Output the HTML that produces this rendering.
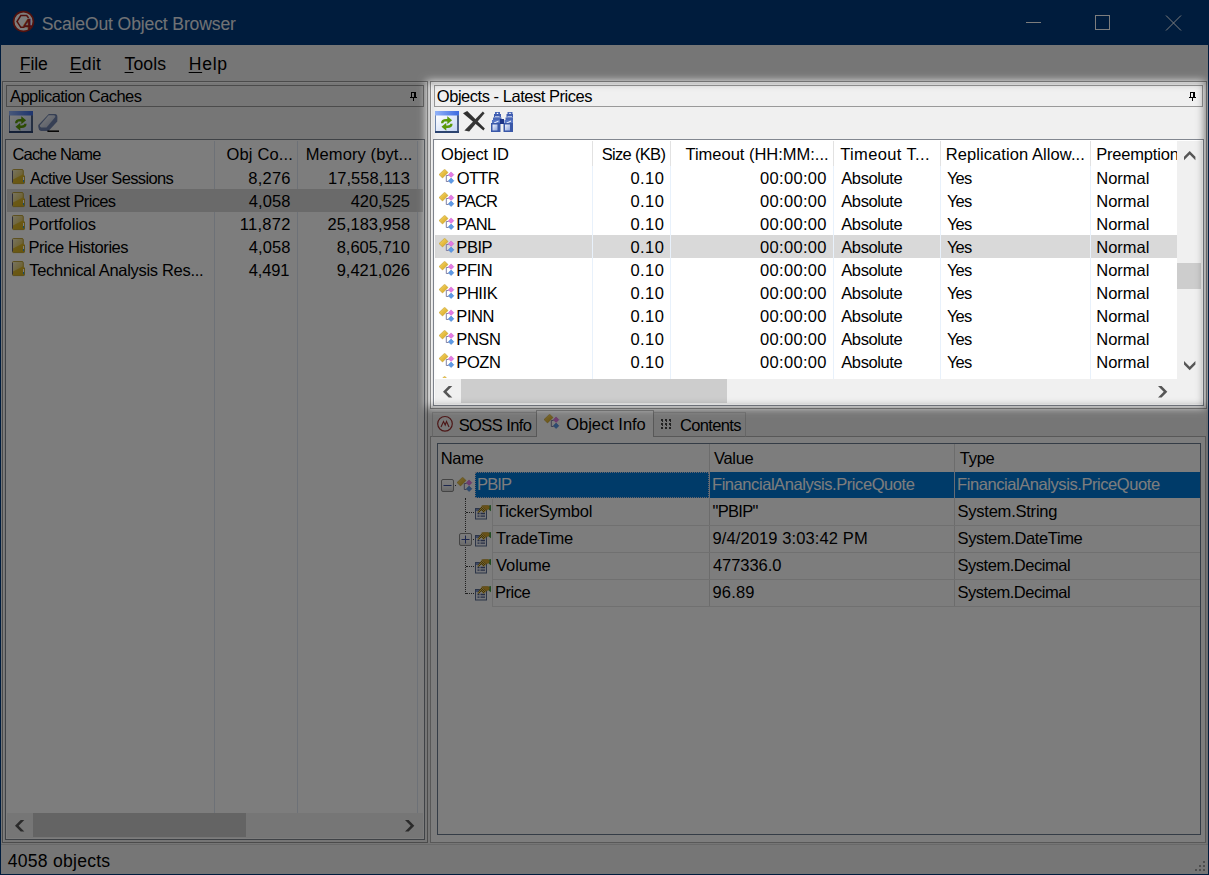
<!DOCTYPE html>
<html><head><meta charset="utf-8"><title>ScaleOut Object Browser</title>
<style>
*{box-sizing:border-box;margin:0;padding:0}
html,body{width:1209px;height:875px;overflow:hidden;background:#f0f0f0}
body{position:relative;font-family:"Liberation Sans",sans-serif;font-size:16.5px;color:#000}
.abs{position:absolute}
.t{position:absolute;white-space:nowrap;line-height:20px;height:20px}
.r{text-align:right}
.n{letter-spacing:.25px}
#title{left:0;top:0;width:1209px;height:45px;background:#00397c}
#frameL{left:0;top:45px;width:1px;height:830px;background:#00397c}
#frameR{left:1208px;top:45px;width:1px;height:830px;background:#00397c}
#frameB{left:0;top:874px;width:1209px;height:1px;background:#00397c}
#menu{left:1px;top:45px;width:1207px;height:37px;background:#f0f0f0}
.mn u{text-decoration:underline;text-underline-offset:1.5px;text-decoration-thickness:1px}
.capbox{border:1px solid #999;background:#f0f0f0;height:21px}
.list{background:#fff;border:1px solid #828790}
.hsep{position:absolute;width:1px;background:#dfe7f3}
.csep{position:absolute;width:1px;background:#e8f1fb}
.sel{position:absolute;background:#d9d9d9}
.w{color:#fff}
</style></head><body>
<svg width="0" height="0" style="position:absolute">
 <defs>
  <linearGradient id="rg" x1="0" y1="0" x2="1" y2="1"><stop offset="0" stop-color="#fff"/><stop offset="1" stop-color="#c5d5f5"/></linearGradient>
  <linearGradient id="eg" x1="0" y1="0" x2="1" y2="1"><stop offset="0" stop-color="#fff"/><stop offset="1" stop-color="#aab4cc"/></linearGradient>
  <linearGradient id="bg" x1="0" y1="0" x2="1" y2="0"><stop offset="0" stop-color="#8fa8e0"/><stop offset=".45" stop-color="#dfe8fa"/><stop offset="1" stop-color="#3f5fb4"/></linearGradient>
  <linearGradient id="fg" x1="0" y1="0" x2="1" y2="1"><stop offset="0" stop-color="#f4eecc"/><stop offset=".55" stop-color="#e2cc70"/><stop offset="1" stop-color="#d8b020"/></linearGradient>
  <linearGradient id="tg" x1="0" y1="0" x2="1" y2="0"><stop offset="0" stop-color="#94b4f8"/><stop offset="1" stop-color="#3c6ae0"/></linearGradient>
  <linearGradient id="yg" x1="0" y1="0" x2="1" y2="1"><stop offset="0" stop-color="#f8dc70"/><stop offset="1" stop-color="#d4a018"/></linearGradient>
  <linearGradient id="ig" x1="0" y1="0" x2="1" y2="1"><stop offset="0" stop-color="#eef2fc"/><stop offset="1" stop-color="#8ea4dc"/></linearGradient>
  <linearGradient id="xg" x1="0" y1="0" x2="0" y2="1"><stop offset="0" stop-color="#fff"/><stop offset=".5" stop-color="#f4f4f4"/><stop offset="1" stop-color="#d4d4d4"/></linearGradient>
  <g id="refico">
   <rect x="0" y="0" width="24" height="22" fill="#7088b0"/>
   <rect x="1" y="4" width="21" height="16" fill="url(#rg)"/>
   <rect x="0" y="0" width="24" height="4.500" fill="url(#tg)"/>
   <rect x="22" y="4.500" width="2" height="17.500" fill="#4c6088"/>
   <rect x="0" y="20" width="24" height="2" fill="#2c4470"/>
   <path d="M6 12.200c0-3 2-4.300 5-4.300h1.300V5.200l4.800 4-4.800 4v-2.700H11c-1.700 0-2.600.4-2.600 1.700z" fill="#5a9a08"/>
   <path d="M17.600 12.800c0 3-2 4.300-5 4.300h-1.300v2.700l-4.800-4 4.800-4v2.700h1.300c1.700 0 2.600-.4 2.600-1.700z" fill="#5a9a08"/>
  </g>
  <g id="pinico"><path d="M1 0H6V5H7V6H4V9H3V6H0V5H1ZM2 1V5H4V1Z" fill="#000" fill-rule="evenodd"/></g>
  <g id="objico">
   <path d="M7.300 6.500V12.500M7.300 6.500H9.600M7.300 12.500H9.600" fill="none" stroke="#74749c" stroke-width=".9"/>
   <path d="M0 5.600L5.600 .2L9 3.500L3.500 9Z" fill="url(#yg)" stroke="#b8901c" stroke-width=".5"/>
   <path d="M9.300 5.700L12.100 2.900L14.900 5.700L12.100 8.500Z" fill="#e47ae4" stroke="#b848b8" stroke-width=".4"/>
   <path d="M9.300 11.800L12.100 9L14.900 11.800L12.100 14.600Z" fill="#5c9ae6" stroke="#2c64c0" stroke-width=".4"/>
  </g>
  <g id="foldico">
   <path d="M1.500 .5H10Q11.300 .5 11.300 1.800V5.800L12.600 7V13.400Q12.600 14.600 11.400 14.600H1.500Q.5 14.600 .5 13.600V1.500Q.5 .5 1.500 .5Z" fill="url(#fg)" stroke="#b09018" stroke-width=".8"/>
   <path d="M1 13.500L1 10.500L10.800 5.500L12.200 7V13.500Q12.200 14.200 11.400 14.200H1.600Q1 14.200 1 13.500Z" fill="#d6ac14" opacity=".75"/>
   <path d="M.5 1.800V13.400" stroke="#5c5c74" stroke-width="1"/>
   <rect x="11" y="8" width="1" height="3" fill="#fff"/><rect x="11" y="11" width="1" height="2.200" fill="#2a9ad8"/>
  </g>
  <pattern id="ck" width="2" height="2" patternUnits="userSpaceOnUse"><rect width="2" height="2" fill="#e8c860"/><rect width="1" height="1" fill="#8a6a10"/><rect x="1" y="1" width="1" height="1" fill="#8a6a10"/></pattern>
  <g id="propico">
   <rect x=".5" y="3.500" width="11" height="10.500" fill="#eef0f6" stroke="#5a6c94" stroke-width="1"/>
   <rect x="1" y="4" width="10" height="2" fill="#7c94cc"/>
   <path d="M2.500 8.500h2M5.500 8.500h4.500M2.500 11.200h2M5.500 11.200h4.500" stroke="#4c5c8c" stroke-width="1.300"/>
   <path d="M13.800 .6L16 0V6.200L13.800 4.800Z" fill="#48a048"/>
   <path d="M2.200 7.200L6.800 .8L11.600 5L8.600 8L6.400 5.600L4 7.800Z" fill="url(#ck)"/>
   <path d="M6.800 .8Q8 .1 9.500 .3H12.800Q14.600 .6 14.500 2.400Q14.300 4.300 12.600 4.600L10.800 5L9 3Z" fill="#d4a630" stroke="#a88420" stroke-width=".4"/>
  </g>
  <g id="arL"><path d="M0 5.700L5.700 0H9.300L3.600 5.700L9.300 11.400H5.700Z" fill="#565656"/></g>
  <g id="arR"><path d="M9.300 5.700L3.600 0H0L5.700 5.700L0 11.400H3.600Z" fill="#565656"/></g>
  <g id="arU"><path d="M5.700 0L0 5.700V9.300L5.700 3.600L11.400 9.300V5.700Z" fill="#565656"/></g>
  <g id="arD"><path d="M5.700 9.300L0 3.600V0L5.700 5.700L11.400 0V3.600Z" fill="#565656"/></g>
 </defs>
</svg>
<div id="title" class="abs">
<svg class="abs" style="left:12px;top:10px" width="24" height="24" viewBox="0 0 24 24"><circle cx="11.500" cy="11.500" r="9.900" fill="#fff" stroke="#a8241c" stroke-width="1.700"/><path d="M12.500 17.300H8.800L5 11.500L8.800 5.500H14.700L16.600 8" fill="none" stroke="#a8241c" stroke-width="1.500"/><text x="11.400" y="18.700" font-family="Liberation Sans, sans-serif" font-weight="bold" font-size="14.500" fill="#a8241c" stroke="#a8241c" stroke-width=".5">4</text></svg>
<div class="t " style="left:41.65px;top:12px;font-size:17.6px;line-height:24px;height:24px;letter-spacing:-0.145px;color:#e6e9ee;">ScaleOut Object Browser</div>
<svg class="abs" style="left:1020px;top:8px" width="170" height="30" viewBox="0 0 170 30" fill="none" stroke="#fff" stroke-width="1"><path d="M6 14.500H21"/><rect x="75.500" y="7.500" width="14" height="14"/><path d="M146 7.500L161 22.500M161 7.500L146 22.500"/></svg>
</div>
<div id="frameL" class="abs"></div><div id="frameR" class="abs"></div><div id="frameB" class="abs"></div>
<div class="abs" style="left:1px;top:45px;width:1207px;height:37px;background:#f0f0f0"></div>
<div class="t mn" style="left:19.80px;top:52px;font-size:17.6px;line-height:24px;height:24px;letter-spacing:-0.133px;"><u>F</u>ile</div>
<div class="t mn" style="left:69.80px;top:52px;font-size:17.6px;line-height:24px;height:24px;letter-spacing:0.283px;"><u>E</u>dit</div>
<div class="t mn" style="left:124.60px;top:52px;font-size:17.6px;line-height:24px;height:24px;letter-spacing:0.075px;"><u>T</u>ools</div>
<div class="t mn" style="left:188.70px;top:52px;font-size:17.6px;line-height:24px;height:24px;letter-spacing:0.733px;"><u>H</u>elp</div>
<div class="abs" style="left:2px;top:81px;width:426px;height:762px;border:1px solid #999;box-shadow:inset 1px 1px 0 #fff"></div>
<div class="abs capbox" style="left:6px;top:85px;width:418px;height:22px;"></div>
<div class="t " style="left:10.00px;top:86px;font-size:16.5px;line-height:20px;height:20px;letter-spacing:-0.544px;">Application Caches</div>
<svg class="abs" style="left:410px;top:92px" width="8" height="9" viewBox="0 0 8 9"><use href="#pinico"/></svg>
<svg class="abs" style="left:9px;top:111px" width="24" height="22" viewBox="0 0 24 22"><use href="#refico"/></svg>
<svg class="abs" style="left:37px;top:111px" width="24" height="22" viewBox="0 0 24 22"><path d="M11.800 3H18.500Q20.600 3.500 20.400 6L20.300 10.500L11.500 20H4Q1.300 19 1.300 16V14Z" fill="#6e82ac"/><path d="M11.600 4.200H17.200Q18.600 4.600 18.300 6L9.500 16.600H4.200Q2.800 16 2.800 14.400Z" fill="url(#eg)"/><path d="M10.400 20.200H22" stroke="#111" stroke-width="1.600"/></svg>
<div class="abs list" style="left:5px;top:139px;width:420px;height:701px;"></div>
<div class="hsep" style="left:214px;top:141px;width:1px;height:672px;"></div>
<div class="hsep" style="left:297px;top:141px;width:1px;height:672px;"></div>
<div class="hsep" style="left:417px;top:141px;width:1px;height:672px;"></div>
<div class="sel" style="left:7px;top:189px;width:416px;height:23px;"></div>
<div class="t " style="left:12.45px;top:144px;font-size:16.5px;line-height:20px;height:20px;letter-spacing:-0.806px;">Cache Name</div>
<div class="t " style="left:226.55px;top:144px;font-size:16.5px;line-height:20px;height:20px;letter-spacing:0.156px;">Obj Co...</div>
<div class="t " style="left:305.75px;top:144px;font-size:16.5px;line-height:20px;height:20px;letter-spacing:0.096px;">Memory (byt...</div>
<svg class="abs" style="left:12px;top:169px" width="13" height="16" viewBox="0 0 13 16"><use href="#foldico"/></svg>
<div class="t " style="left:30.00px;top:168px;font-size:16.5px;line-height:20px;height:20px;letter-spacing:-0.634px;">Active User Sessions</div>
<div class="t " style="left:248.35px;top:168px;font-size:16.5px;line-height:20px;height:20px;letter-spacing:0.212px;">8,276</div>
<div class="t " style="left:327.95px;top:168px;font-size:16.5px;line-height:20px;height:20px;letter-spacing:0.067px;">17,558,113</div>
<svg class="abs" style="left:12px;top:192px" width="13" height="16" viewBox="0 0 13 16"><use href="#foldico"/></svg>
<div class="t " style="left:28.45px;top:191px;font-size:16.5px;line-height:20px;height:20px;letter-spacing:-0.642px;">Latest Prices</div>
<div class="t " style="left:248.85px;top:191px;font-size:16.5px;line-height:20px;height:20px;letter-spacing:0.087px;">4,058</div>
<div class="t " style="left:350.75px;top:191px;font-size:16.5px;line-height:20px;height:20px;letter-spacing:-0.075px;">420,525</div>
<svg class="abs" style="left:12px;top:215px" width="13" height="16" viewBox="0 0 13 16"><use href="#foldico"/></svg>
<div class="t " style="left:28.45px;top:214px;font-size:16.5px;line-height:20px;height:20px;letter-spacing:-0.133px;">Portfolios</div>
<div class="t " style="left:239.75px;top:214px;font-size:16.5px;line-height:20px;height:20px;letter-spacing:0.290px;">11,872</div>
<div class="t " style="left:327.55px;top:214px;font-size:16.5px;line-height:20px;height:20px;letter-spacing:0.000px;">25,183,958</div>
<svg class="abs" style="left:12px;top:238px" width="13" height="16" viewBox="0 0 13 16"><use href="#foldico"/></svg>
<div class="t " style="left:28.45px;top:237px;font-size:16.5px;line-height:20px;height:20px;letter-spacing:-0.443px;">Price Histories</div>
<div class="t " style="left:248.85px;top:237px;font-size:16.5px;line-height:20px;height:20px;letter-spacing:0.087px;">4,058</div>
<div class="t " style="left:336.65px;top:237px;font-size:16.5px;line-height:20px;height:20px;letter-spacing:-0.012px;">8,605,710</div>
<svg class="abs" style="left:12px;top:261px" width="13" height="16" viewBox="0 0 13 16"><use href="#foldico"/></svg>
<div class="t " style="left:29.25px;top:260px;font-size:16.5px;line-height:20px;height:20px;letter-spacing:-0.302px;">Technical Analysis Res...</div>
<div class="t " style="left:248.85px;top:260px;font-size:16.5px;line-height:20px;height:20px;letter-spacing:-0.187px;">4,491</div>
<div class="t " style="left:336.65px;top:260px;font-size:16.5px;line-height:20px;height:20px;letter-spacing:-0.012px;">9,421,026</div>
<div class="abs" style="left:7px;top:813px;width:416px;height:25px;background:#f0f0f0"></div>
<div class="abs" style="left:33px;top:813px;width:213px;height:24px;background:#cdcdcd"></div>
<svg class="abs" style="left:15px;top:819.7px" width="10" height="12" viewBox="0 0 10 12"><use href="#arL"/></svg>
<svg class="abs" style="left:404.9px;top:819.7px" width="10" height="12" viewBox="0 0 10 12"><use href="#arR"/></svg>
<div class="abs" style="left:430px;top:81px;width:777px;height:328px;border:1px solid #999;box-shadow:inset 1px 1px 0 #fff"></div>
<div class="abs capbox" style="left:434px;top:85px;width:769px;height:22px;"></div>
<div class="t " style="left:436.85px;top:86px;font-size:16.5px;line-height:20px;height:20px;letter-spacing:-0.470px;">Objects - Latest Prices</div>
<svg class="abs" style="left:1189px;top:92px" width="8" height="9" viewBox="0 0 8 9"><use href="#pinico"/></svg>
<svg class="abs" style="left:435px;top:111px" width="24" height="22" viewBox="0 0 24 22"><use href="#refico"/></svg>
<svg class="abs" style="left:463px;top:111px" width="23" height="22" viewBox="0 0 23 22"><path d="M0 2.200L4.200 0L21.800 17.400L20.400 19.600Z" fill="#303030"/><path d="M19.800 .6L21.600 2.200L6.200 20.600L1.400 19.400Z" fill="#363636"/></svg>
<svg class="abs" style="left:491px;top:112px" width="22" height="20" viewBox="0 0 22 20"><g transform="translate(0 0)"><rect x="4" y="0" width="5" height="2.600" fill="#4a68b8"/><circle cx="6.500" cy="1.500" r=".8" fill="#fff"/><rect x="3" y="2" width="7" height="3.500" fill="#3f5cb0"/><rect x="4" y="4.200" width="4.500" height="1" fill="#c8d4f0"/><rect x="2" y="5.500" width="8.500" height="3" fill="#4a68b8"/><rect x="1" y="8" width="9.500" height="3.500" fill="#5876c4"/><path d="M3 10.500L7.500 8.500V9.800L3 11.500Z" fill="#e4eafa"/><rect x="0" y="11" width="9.500" height="9" fill="#3a58a8"/><rect x="1.500" y="12.500" width="5" height="6" fill="url(#ig)"/></g><g transform="translate(12.5 0)"><rect x="4" y="0" width="5" height="2.600" fill="#4a68b8"/><circle cx="6.500" cy="1.500" r=".8" fill="#fff"/><rect x="3" y="2" width="7" height="3.500" fill="#3f5cb0"/><rect x="4" y="4.200" width="4.500" height="1" fill="#c8d4f0"/><rect x="2" y="5.500" width="8.500" height="3" fill="#4a68b8"/><rect x="1" y="8" width="9.500" height="3.500" fill="#5876c4"/><path d="M3 10.500L7.500 8.500V9.800L3 11.500Z" fill="#e4eafa"/><rect x="0" y="11" width="9.500" height="9" fill="#3a58a8"/><rect x="1.500" y="12.500" width="5" height="6" fill="url(#ig)"/></g><rect x="9" y="7" width="4" height="5" fill="#1c3488"/></svg>
<div class="abs list" style="left:433px;top:139px;width:771px;height:267px;"></div>
<div class="sel" style="left:435px;top:235px;width:742px;height:23px;"></div>
<div class="csep" style="left:592px;top:141px;width:1px;height:238px;"></div>
<div class="abs" style="left:592px;top:141px;width:1px;height:25px;background:#e2e2e2"></div>
<div class="csep" style="left:670px;top:141px;width:1px;height:238px;"></div>
<div class="abs" style="left:670px;top:141px;width:1px;height:25px;background:#e2e2e2"></div>
<div class="csep" style="left:833px;top:141px;width:1px;height:238px;"></div>
<div class="abs" style="left:833px;top:141px;width:1px;height:25px;background:#e2e2e2"></div>
<div class="csep" style="left:940px;top:141px;width:1px;height:238px;"></div>
<div class="abs" style="left:940px;top:141px;width:1px;height:25px;background:#e2e2e2"></div>
<div class="csep" style="left:1090px;top:141px;width:1px;height:238px;"></div>
<div class="abs" style="left:1090px;top:141px;width:1px;height:25px;background:#e2e2e2"></div>
<div class="t " style="left:441.00px;top:144px;font-size:16.5px;line-height:20px;height:20px;letter-spacing:-0.100px;">Object ID</div>
<div class="t " style="left:601.75px;top:144px;font-size:16.5px;line-height:20px;height:20px;letter-spacing:-0.688px;">Size (KB)</div>
<div class="t " style="left:685.50px;top:144px;font-size:16.5px;line-height:20px;height:20px;letter-spacing:-0.015px;">Timeout (HH:MM:...</div>
<div class="t " style="left:840.25px;top:144px;font-size:16.5px;line-height:20px;height:20px;letter-spacing:0.364px;">Timeout T...</div>
<div class="t " style="left:945.75px;top:144px;font-size:16.5px;line-height:20px;height:20px;letter-spacing:0.079px;">Replication Allow...</div>
<div class="t " style="left:1096.25px;top:144px;font-size:16.5px;line-height:20px;height:20px;letter-spacing:-0.200px;width:80.75px;overflow:hidden;">Preemption</div>
<svg class="abs" style="left:439px;top:168.5px" width="16" height="16" viewBox="0 0 16 16"><use href="#objico"/></svg>
<div class="t " style="left:456.85px;top:168px;font-size:16.5px;line-height:20px;height:20px;letter-spacing:-0.717px;">OTTR</div>
<div class="t " style="left:630.50px;top:168px;font-size:16.5px;line-height:20px;height:20px;letter-spacing:0.417px;">0.10</div>
<div class="t " style="left:760.00px;top:168px;font-size:16.5px;line-height:20px;height:20px;letter-spacing:0.321px;">00:00:00</div>
<div class="t " style="left:841.25px;top:168px;font-size:16.5px;line-height:20px;height:20px;letter-spacing:-0.393px;">Absolute</div>
<div class="t " style="left:947.00px;top:168px;font-size:16.5px;line-height:20px;height:20px;letter-spacing:-0.875px;">Yes</div>
<div class="t " style="left:1096.25px;top:168px;font-size:16.5px;line-height:20px;height:20px;letter-spacing:0.000px;">Normal</div>
<svg class="abs" style="left:439px;top:191.5px" width="16" height="16" viewBox="0 0 16 16"><use href="#objico"/></svg>
<div class="t " style="left:456.35px;top:191px;font-size:16.5px;line-height:20px;height:20px;letter-spacing:-1.033px;">PACR</div>
<div class="t " style="left:630.50px;top:191px;font-size:16.5px;line-height:20px;height:20px;letter-spacing:0.417px;">0.10</div>
<div class="t " style="left:760.00px;top:191px;font-size:16.5px;line-height:20px;height:20px;letter-spacing:0.321px;">00:00:00</div>
<div class="t " style="left:841.25px;top:191px;font-size:16.5px;line-height:20px;height:20px;letter-spacing:-0.393px;">Absolute</div>
<div class="t " style="left:947.00px;top:191px;font-size:16.5px;line-height:20px;height:20px;letter-spacing:-0.875px;">Yes</div>
<div class="t " style="left:1096.25px;top:191px;font-size:16.5px;line-height:20px;height:20px;letter-spacing:0.000px;">Normal</div>
<svg class="abs" style="left:439px;top:214.5px" width="16" height="16" viewBox="0 0 16 16"><use href="#objico"/></svg>
<div class="t " style="left:456.35px;top:214px;font-size:16.5px;line-height:20px;height:20px;letter-spacing:-0.700px;">PANL</div>
<div class="t " style="left:630.50px;top:214px;font-size:16.5px;line-height:20px;height:20px;letter-spacing:0.417px;">0.10</div>
<div class="t " style="left:760.00px;top:214px;font-size:16.5px;line-height:20px;height:20px;letter-spacing:0.321px;">00:00:00</div>
<div class="t " style="left:841.25px;top:214px;font-size:16.5px;line-height:20px;height:20px;letter-spacing:-0.393px;">Absolute</div>
<div class="t " style="left:947.00px;top:214px;font-size:16.5px;line-height:20px;height:20px;letter-spacing:-0.875px;">Yes</div>
<div class="t " style="left:1096.25px;top:214px;font-size:16.5px;line-height:20px;height:20px;letter-spacing:0.000px;">Normal</div>
<svg class="abs" style="left:439px;top:237.5px" width="16" height="16" viewBox="0 0 16 16"><use href="#objico"/></svg>
<div class="t " style="left:456.35px;top:237px;font-size:16.5px;line-height:20px;height:20px;letter-spacing:-0.450px;">PBIP</div>
<div class="t " style="left:630.50px;top:237px;font-size:16.5px;line-height:20px;height:20px;letter-spacing:0.417px;">0.10</div>
<div class="t " style="left:760.00px;top:237px;font-size:16.5px;line-height:20px;height:20px;letter-spacing:0.321px;">00:00:00</div>
<div class="t " style="left:841.25px;top:237px;font-size:16.5px;line-height:20px;height:20px;letter-spacing:-0.393px;">Absolute</div>
<div class="t " style="left:947.00px;top:237px;font-size:16.5px;line-height:20px;height:20px;letter-spacing:-0.875px;">Yes</div>
<div class="t " style="left:1096.25px;top:237px;font-size:16.5px;line-height:20px;height:20px;letter-spacing:0.000px;">Normal</div>
<svg class="abs" style="left:439px;top:260.5px" width="16" height="16" viewBox="0 0 16 16"><use href="#objico"/></svg>
<div class="t " style="left:456.35px;top:260px;font-size:16.5px;line-height:20px;height:20px;letter-spacing:-0.450px;">PFIN</div>
<div class="t " style="left:630.50px;top:260px;font-size:16.5px;line-height:20px;height:20px;letter-spacing:0.417px;">0.10</div>
<div class="t " style="left:760.00px;top:260px;font-size:16.5px;line-height:20px;height:20px;letter-spacing:0.321px;">00:00:00</div>
<div class="t " style="left:841.25px;top:260px;font-size:16.5px;line-height:20px;height:20px;letter-spacing:-0.393px;">Absolute</div>
<div class="t " style="left:947.00px;top:260px;font-size:16.5px;line-height:20px;height:20px;letter-spacing:-0.875px;">Yes</div>
<div class="t " style="left:1096.25px;top:260px;font-size:16.5px;line-height:20px;height:20px;letter-spacing:0.000px;">Normal</div>
<svg class="abs" style="left:439px;top:283.5px" width="16" height="16" viewBox="0 0 16 16"><use href="#objico"/></svg>
<div class="t " style="left:456.35px;top:283px;font-size:16.5px;line-height:20px;height:20px;letter-spacing:-0.450px;">PHIIK</div>
<div class="t " style="left:630.50px;top:283px;font-size:16.5px;line-height:20px;height:20px;letter-spacing:0.417px;">0.10</div>
<div class="t " style="left:760.00px;top:283px;font-size:16.5px;line-height:20px;height:20px;letter-spacing:0.321px;">00:00:00</div>
<div class="t " style="left:841.25px;top:283px;font-size:16.5px;line-height:20px;height:20px;letter-spacing:-0.393px;">Absolute</div>
<div class="t " style="left:947.00px;top:283px;font-size:16.5px;line-height:20px;height:20px;letter-spacing:-0.875px;">Yes</div>
<div class="t " style="left:1096.25px;top:283px;font-size:16.5px;line-height:20px;height:20px;letter-spacing:0.000px;">Normal</div>
<svg class="abs" style="left:439px;top:306.5px" width="16" height="16" viewBox="0 0 16 16"><use href="#objico"/></svg>
<div class="t " style="left:456.35px;top:306px;font-size:16.5px;line-height:20px;height:20px;letter-spacing:-0.450px;">PINN</div>
<div class="t " style="left:630.50px;top:306px;font-size:16.5px;line-height:20px;height:20px;letter-spacing:0.417px;">0.10</div>
<div class="t " style="left:760.00px;top:306px;font-size:16.5px;line-height:20px;height:20px;letter-spacing:0.321px;">00:00:00</div>
<div class="t " style="left:841.25px;top:306px;font-size:16.5px;line-height:20px;height:20px;letter-spacing:-0.393px;">Absolute</div>
<div class="t " style="left:947.00px;top:306px;font-size:16.5px;line-height:20px;height:20px;letter-spacing:-0.875px;">Yes</div>
<div class="t " style="left:1096.25px;top:306px;font-size:16.5px;line-height:20px;height:20px;letter-spacing:0.000px;">Normal</div>
<svg class="abs" style="left:439px;top:329.5px" width="16" height="16" viewBox="0 0 16 16"><use href="#objico"/></svg>
<div class="t " style="left:456.35px;top:329px;font-size:16.5px;line-height:20px;height:20px;letter-spacing:-0.450px;">PNSN</div>
<div class="t " style="left:630.50px;top:329px;font-size:16.5px;line-height:20px;height:20px;letter-spacing:0.417px;">0.10</div>
<div class="t " style="left:760.00px;top:329px;font-size:16.5px;line-height:20px;height:20px;letter-spacing:0.321px;">00:00:00</div>
<div class="t " style="left:841.25px;top:329px;font-size:16.5px;line-height:20px;height:20px;letter-spacing:-0.393px;">Absolute</div>
<div class="t " style="left:947.00px;top:329px;font-size:16.5px;line-height:20px;height:20px;letter-spacing:-0.875px;">Yes</div>
<div class="t " style="left:1096.25px;top:329px;font-size:16.5px;line-height:20px;height:20px;letter-spacing:0.000px;">Normal</div>
<svg class="abs" style="left:439px;top:352.5px" width="16" height="16" viewBox="0 0 16 16"><use href="#objico"/></svg>
<div class="t " style="left:456.35px;top:352px;font-size:16.5px;line-height:20px;height:20px;letter-spacing:-0.450px;">POZN</div>
<div class="t " style="left:630.50px;top:352px;font-size:16.5px;line-height:20px;height:20px;letter-spacing:0.417px;">0.10</div>
<div class="t " style="left:760.00px;top:352px;font-size:16.5px;line-height:20px;height:20px;letter-spacing:0.321px;">00:00:00</div>
<div class="t " style="left:841.25px;top:352px;font-size:16.5px;line-height:20px;height:20px;letter-spacing:-0.393px;">Absolute</div>
<div class="t " style="left:947.00px;top:352px;font-size:16.5px;line-height:20px;height:20px;letter-spacing:-0.875px;">Yes</div>
<div class="t " style="left:1096.25px;top:352px;font-size:16.5px;line-height:20px;height:20px;letter-spacing:0.000px;">Normal</div>
<svg class="abs" style="left:439px;top:375.5px;clip-path:inset(0 0 13.5px 0)" width="16" height="16" viewBox="0 0 16 16"><use href="#objico"/></svg>
<div class="abs" style="left:1177px;top:141px;width:25px;height:263px;background:#f0f0f0"></div>
<div class="abs" style="left:1177px;top:263px;width:24px;height:26px;background:#cdcdcd"></div>
<svg class="abs" style="left:1183.9px;top:151.1px" width="12" height="10" viewBox="0 0 12 10"><use href="#arU"/></svg>
<svg class="abs" style="left:1183.9px;top:360.8px" width="12" height="10" viewBox="0 0 12 10"><use href="#arD"/></svg>
<div class="abs" style="left:435px;top:379px;width:742px;height:25px;background:#f0f0f0"></div>
<div class="abs" style="left:461px;top:379px;width:266px;height:24px;background:#cdcdcd"></div>
<svg class="abs" style="left:443px;top:386px" width="10" height="12" viewBox="0 0 10 12"><use href="#arL"/></svg>
<svg class="abs" style="left:1158px;top:386px" width="10" height="12" viewBox="0 0 10 12"><use href="#arR"/></svg>
<div class="abs" style="left:430px;top:436px;width:776px;height:407px;border:1px solid #b4b4b4;background:#fff"></div>
<div class="abs" style="left:432px;top:412px;width:105px;height:25px;border:1px solid #d0d0d0;border-bottom-color:#b4b4b4;background:#f0f0f0"></div>
<div class="abs" style="left:653px;top:412px;width:93px;height:25px;border:1px solid #d0d0d0;border-bottom-color:#b4b4b4;background:#f0f0f0"></div>
<div class="abs" style="left:536px;top:410px;width:118px;height:27px;border:1px solid #b4b4b4;border-bottom:none;background:#fff"></div>
<svg class="abs" style="left:436px;top:415px" width="18" height="18" viewBox="0 0 18 18"><circle cx="9" cy="8.800" r="7.300" fill="#f4f4f4" stroke="#9c3030" stroke-width="1.200"/><path d="M5 12L7.500 6.500L9.200 10L10.500 6.500L13 12" fill="none" stroke="#9c3030" stroke-width="1.100"/></svg>
<div class="t " style="left:458.65px;top:415px;font-size:16.5px;line-height:20px;height:20px;letter-spacing:-0.587px;">SOSS Info</div>
<svg class="abs" style="left:544px;top:413.5px" width="16" height="16" viewBox="0 0 16 16"><use href="#objico"/></svg>
<div class="t " style="left:566.25px;top:414px;font-size:16.5px;line-height:20px;height:20px;letter-spacing:-0.025px;">Object Info</div>
<svg class="abs" style="left:660px;top:418px" width="13" height="13" viewBox="0 0 13 13"><g fill="#444"><rect x="1" y="1" width="2" height="2"/><rect x="2" y="3" width="1" height="1"/><rect x="5" y="1" width="2" height="2"/><rect x="6" y="3" width="1" height="1"/><rect x="9" y="1" width="2" height="2"/><rect x="10" y="3" width="1" height="1"/><rect x="1" y="5" width="2" height="2"/><rect x="2" y="7" width="1" height="1"/><rect x="5" y="5" width="2" height="2"/><rect x="6" y="7" width="1" height="1"/><rect x="9" y="5" width="2" height="2"/><rect x="10" y="7" width="1" height="1"/><rect x="1" y="9" width="2" height="2"/><rect x="5" y="9" width="2" height="2"/><rect x="9" y="9" width="2" height="2"/></g></svg>
<div class="t " style="left:679.95px;top:415px;font-size:16.5px;line-height:20px;height:20px;letter-spacing:-0.636px;">Contents</div>
<div class="abs" style="left:437px;top:443px;width:764px;height:392px;border:1px solid #6b7a90;background:#fff"></div>
<div class="abs" style="left:709px;top:444px;width:1px;height:162px;background:#dcdcdc"></div>
<div class="abs" style="left:954px;top:444px;width:1px;height:162px;background:#dcdcdc"></div>
<div class="t " style="left:440.75px;top:448px;font-size:16.5px;line-height:20px;height:20px;letter-spacing:-0.333px;">Name</div>
<div class="t " style="left:714.00px;top:448px;font-size:16.5px;line-height:20px;height:20px;letter-spacing:-0.312px;">Value</div>
<div class="t " style="left:959.75px;top:448px;font-size:16.5px;line-height:20px;height:20px;letter-spacing:-0.250px;">Type</div>
<div class="abs" style="left:475px;top:472px;width:725px;height:26px;background:#0078d7"></div>
<div class="abs" style="left:475px;top:472px;width:234px;height:26px;border:1px dotted #ccd"></div>
<div class="abs" style="left:709px;top:472px;width:1px;height:26px;background:#d0dcec"></div>
<div class="abs" style="left:954px;top:472px;width:1px;height:26px;background:#d0dcec"></div>
<div class="t w" style="left:477.00px;top:474px;font-size:16.5px;line-height:20px;height:20px;letter-spacing:-0.833px;">PBIP</div>
<div class="t w" style="left:712.00px;top:474px;font-size:16.5px;line-height:20px;height:20px;letter-spacing:-0.435px;">FinancialAnalysis.PriceQuote</div>
<div class="t w" style="left:957.00px;top:474px;font-size:16.5px;line-height:20px;height:20px;letter-spacing:-0.426px;">FinancialAnalysis.PriceQuote</div>
<svg class="abs" style="left:457px;top:476.5px" width="16" height="16" viewBox="0 0 16 16"><use href="#objico"/></svg>
<div class="abs" style="left:492px;top:525px;width:708px;height:1px;background:#e4e4e4"></div>
<div class="abs" style="left:492px;top:499px;width:1px;height:27px;background:#e4e4e4"></div>
<div class="t " style="left:496.00px;top:501px;font-size:16.5px;line-height:20px;height:20px;letter-spacing:-0.273px;">TickerSymbol</div>
<div class="t " style="left:712.50px;top:501px;font-size:16.5px;line-height:20px;height:20px;letter-spacing:-0.700px;">&quot;PBIP&quot;</div>
<div class="t " style="left:957.50px;top:501px;font-size:16.5px;line-height:20px;height:20px;letter-spacing:-0.229px;">System.String</div>
<svg class="abs" style="left:475px;top:505px" width="17" height="16" viewBox="0 0 17 16"><use href="#propico"/></svg>
<div class="abs" style="left:492px;top:552px;width:708px;height:1px;background:#e4e4e4"></div>
<div class="abs" style="left:492px;top:526px;width:1px;height:27px;background:#e4e4e4"></div>
<div class="t " style="left:496.00px;top:528px;font-size:16.5px;line-height:20px;height:20px;letter-spacing:-0.156px;">TradeTime</div>
<div class="t " style="left:712.50px;top:528px;font-size:16.5px;line-height:20px;height:20px;letter-spacing:0.111px;">9/4/2019 3:03:42 PM</div>
<div class="t " style="left:957.50px;top:528px;font-size:16.5px;line-height:20px;height:20px;letter-spacing:-0.375px;">System.DateTime</div>
<svg class="abs" style="left:475px;top:532px" width="17" height="16" viewBox="0 0 17 16"><use href="#propico"/></svg>
<div class="abs" style="left:492px;top:579px;width:708px;height:1px;background:#e4e4e4"></div>
<div class="abs" style="left:492px;top:553px;width:1px;height:27px;background:#e4e4e4"></div>
<div class="t " style="left:496.00px;top:555px;font-size:16.5px;line-height:20px;height:20px;letter-spacing:-0.050px;">Volume</div>
<div class="t " style="left:713.00px;top:555px;font-size:16.5px;line-height:20px;height:20px;letter-spacing:-0.071px;">477336.0</div>
<div class="t " style="left:957.50px;top:555px;font-size:16.5px;line-height:20px;height:20px;letter-spacing:-0.462px;">System.Decimal</div>
<svg class="abs" style="left:475px;top:559px" width="17" height="16" viewBox="0 0 17 16"><use href="#propico"/></svg>
<div class="abs" style="left:492px;top:606px;width:708px;height:1px;background:#e4e4e4"></div>
<div class="abs" style="left:492px;top:580px;width:1px;height:27px;background:#e4e4e4"></div>
<div class="t " style="left:495.00px;top:582px;font-size:16.5px;line-height:20px;height:20px;letter-spacing:-0.500px;">Price</div>
<div class="t " style="left:712.50px;top:582px;font-size:16.5px;line-height:20px;height:20px;letter-spacing:0.188px;">96.89</div>
<div class="t " style="left:957.50px;top:582px;font-size:16.5px;line-height:20px;height:20px;letter-spacing:-0.462px;">System.Decimal</div>
<svg class="abs" style="left:475px;top:586px" width="17" height="16" viewBox="0 0 17 16"><use href="#propico"/></svg>
<div class="abs" style="left:465px;top:498px;width:0px;height:96px;border-left:1px dotted #404040"></div>
<div class="abs" style="left:466px;top:512px;width:8px;height:0px;border-top:1px dotted #404040"></div>
<div class="abs" style="left:466px;top:566px;width:8px;height:0px;border-top:1px dotted #404040"></div>
<div class="abs" style="left:466px;top:593px;width:8px;height:0px;border-top:1px dotted #404040"></div>
<div class="abs" style="left:455px;top:485px;width:1px;height:1px;background:#404040"></div>
<div class="abs" style="left:473px;top:539px;width:1px;height:1px;background:#404040"></div>
<svg class="abs" style="left:441px;top:479px" width="13" height="13" viewBox="0 0 13 13"><rect x=".5" y=".5" width="12" height="12" rx="1.500" fill="url(#xg)" stroke="#8c8c8c"/><path d="M2.500 6.500H10.500" stroke="#3a50a0"/></svg>
<svg class="abs" style="left:459px;top:533px" width="13" height="13" viewBox="0 0 13 13"><rect x=".5" y=".5" width="12" height="12" rx="1.500" fill="url(#xg)" stroke="#8c8c8c"/><path d="M2.500 6.500H10.500M6.500 2.500V10.500" stroke="#3a50a0"/></svg>
<div class="abs" style="left:1206px;top:410px;width:2px;height:434px;background:#e6e6e6"></div>
<div class="abs" style="left:1px;top:844px;width:1207px;height:1px;background:#d7d7d7"></div>
<div class="t " style="left:7.80px;top:849px;font-size:17.6px;line-height:24px;height:24px;letter-spacing:0.232px;">4058 objects</div>
<svg class="abs" style="left:1195px;top:861px" width="12" height="12" viewBox="0 0 12 12"><g fill="#a0a0a0"><rect x="8" y="0" width="2" height="2"/><rect x="4" y="4" width="2" height="2"/><rect x="8" y="4" width="2" height="2"/><rect x="0" y="8" width="2" height="2"/><rect x="4" y="8" width="2" height="2"/><rect x="8" y="8" width="2" height="2"/></g></svg>
<svg class="abs" style="left:0;top:0;pointer-events:none" width="1209" height="875" viewBox="0 0 1209 875"><defs><filter id="bl" filterUnits="userSpaceOnUse" x="380" y="40" width="900" height="420"><feGaussianBlur stdDeviation="4"/></filter><mask id="hm" maskUnits="userSpaceOnUse" x="0" y="0" width="1209" height="875"><rect width="1209" height="875" fill="#fff"/><rect x="426.600" y="81.300" width="778" height="326" fill="#000" filter="url(#bl)"/></mask></defs><rect width="1209" height="875" fill="#000" fill-opacity=".51" mask="url(#hm)"/></svg>
</body></html>
